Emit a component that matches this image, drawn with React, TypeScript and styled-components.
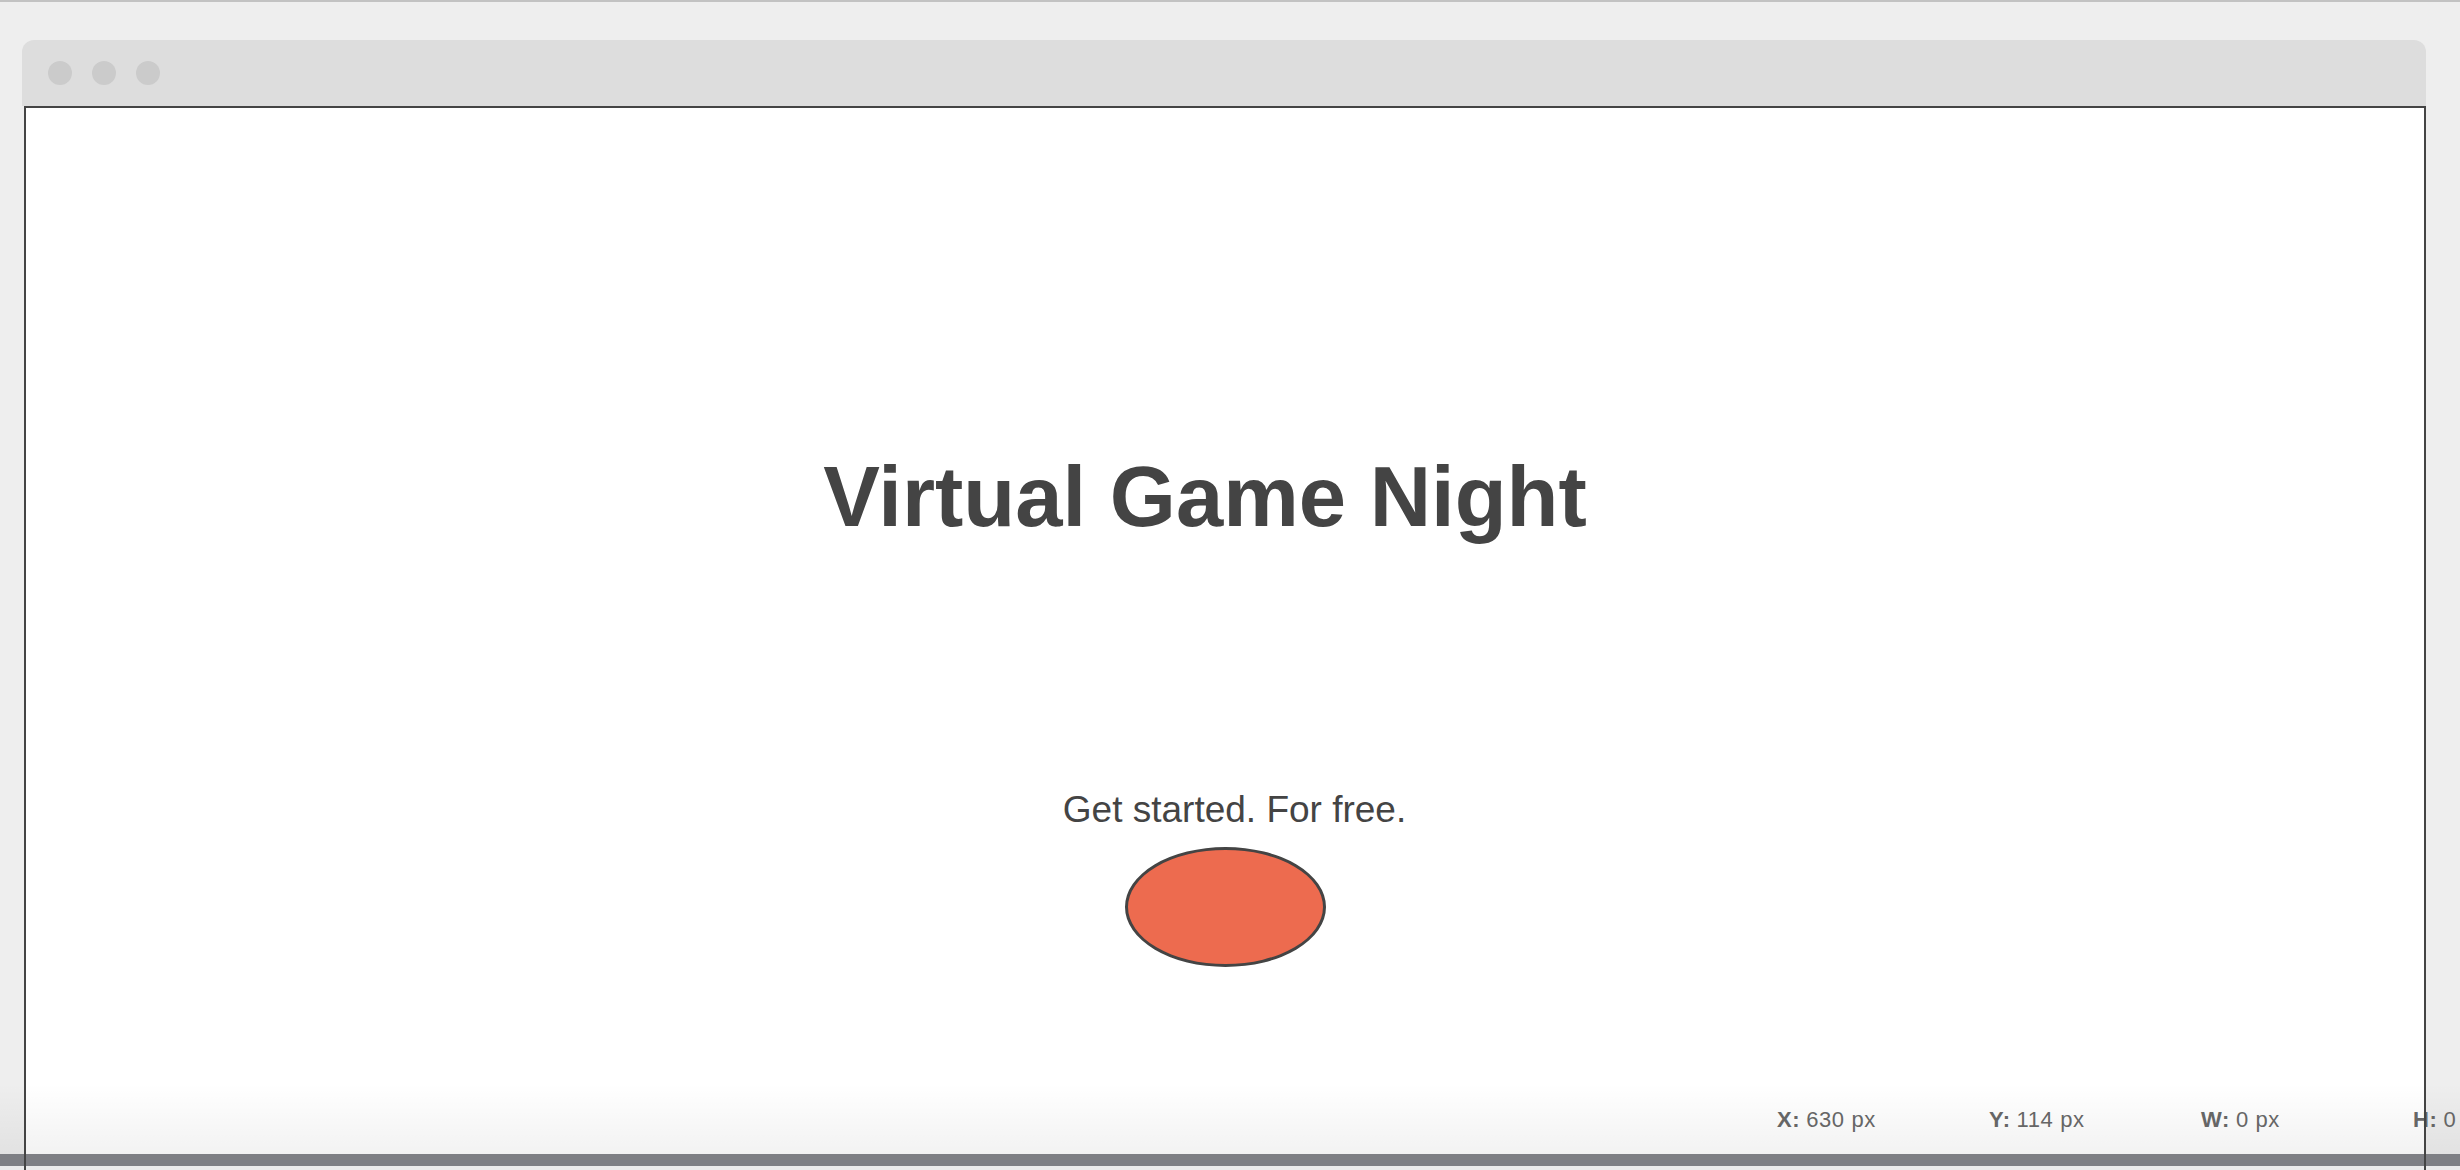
import React from "react";
import styled, { createGlobalStyle } from "styled-components";

const GlobalStyle = createGlobalStyle`
  html, body {
    margin: 0;
    padding: 0;
    height: 100%;
    overflow: hidden;
    background: #eeeeee;
  }
  #root {
    height: 100%;
  }
`;

const Page = styled.div`
  position: relative;
  height: 1170px;
  display: flex;
  flex-direction: column;
  box-sizing: border-box;
  border-top: 2px solid #c2c2c2;
  padding: 38px 34px 0 22px;
  font-family: "Liberation Sans", Arial, sans-serif;
  overflow: hidden;
`;

const Window = styled.div`
  flex: 1;
  display: flex;
  flex-direction: column;
`;

const Chrome = styled.div`
  height: 66px;
  background: #dddddd;
  border-radius: 12px 12px 0 0;
  display: flex;
  align-items: center;
  gap: 20px;
  padding-left: 26px;
  box-sizing: border-box;
`;

const Dot = styled.span`
  width: 24px;
  height: 24px;
  border-radius: 50%;
  background: #cbcbcb;
`;

const Content = styled.div`
  position: relative;
  flex: 1;
  margin-left: 2px;
  background: #ffffff;
  display: flex;
  flex-direction: column;
  align-items: center;
  padding-top: 349px;

  &::after {
    content: "";
    position: absolute;
    inset: 0;
    border: 2px solid #444444;
    border-bottom: none;
    z-index: 3;
    pointer-events: none;
  }
`;

const Title = styled.h1`
  margin: 0;
  padding-right: 40px;
  font-family: "Liberation Sans", Arial, sans-serif;
  font-weight: 700;
  font-size: 85px;
  line-height: 84px;
  color: #444444;
`;

const Subtitle = styled.p`
  margin: 253px 0 0;
  padding-left: 19px;
  font-family: "Liberation Sans", Arial, sans-serif;
  font-weight: 400;
  font-size: 37px;
  line-height: 36px;
  color: #444444;
`;

const StartButton = styled.button`
  margin-top: 19px;
  width: 201px;
  height: 120px;
  box-sizing: border-box;
  border-radius: 50%;
  border: 3.5px solid #444444;
  background: #ed6b4f;
  padding: 0;
  cursor: pointer;
`;

const StatusOverlay = styled.div`
  position: absolute;
  left: 0;
  right: 0;
  bottom: 0;
  z-index: 2;
  display: flex;
  flex-direction: column;
  pointer-events: none;
`;

const StatusFade = styled.div`
  height: 71px;
  background: linear-gradient(rgba(0, 0, 0, 0), rgba(0, 0, 0, 0.05));
  display: flex;
  align-items: flex-start;
  padding-left: 1777px;
  padding-top: 26px;
  box-sizing: border-box;
  white-space: nowrap;
`;

const StatusCell = styled.div`
  flex: 0 0 212px;
  font-family: "Liberation Sans", Arial, sans-serif;
  font-size: 22px;
  line-height: 22px;
  letter-spacing: 0.6px;
  color: #666666;
`;

const StatusLabel = styled.b`
  font-weight: 700;
  margin-right: 6px;
`;

const DarkBar = styled.div`
  height: 12px;
  background: #7e7f84;
`;

const BottomStrip = styled.div`
  height: 4px;
  background: #ebebeb;
`;

const stats = [
  { label: "X:", value: "630 px" },
  { label: "Y:", value: "114 px" },
  { label: "W:", value: "0 px" },
  { label: "H:", value: "0 px" },
];

export default function App() {
  return (
    <>
      <GlobalStyle />
      <Page>
        <Window>
          <Chrome>
            <Dot />
            <Dot />
            <Dot />
          </Chrome>
          <Content>
            <Title>Virtual Game Night</Title>
            <Subtitle>Get started. For free.</Subtitle>
            <StartButton aria-label="Get started" />
          </Content>
        </Window>
        <StatusOverlay>
          <StatusFade>
            {stats.map((s) => (
              <StatusCell key={s.label}>
                <StatusLabel>{s.label}</StatusLabel>
                {s.value}
              </StatusCell>
            ))}
          </StatusFade>
          <DarkBar />
          <BottomStrip />
        </StatusOverlay>
      </Page>
    </>
  );
}
